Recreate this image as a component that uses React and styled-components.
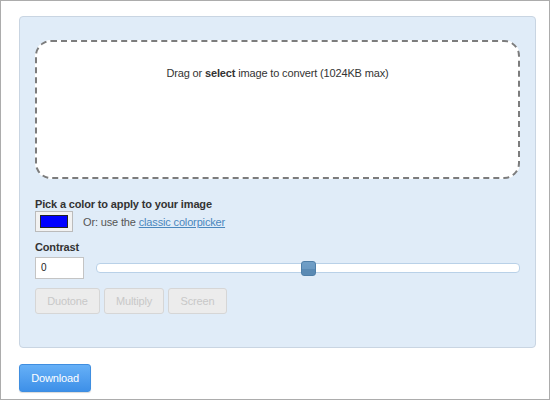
import styled, { createGlobalStyle } from "styled-components";

const Global = createGlobalStyle`
  html, body { margin: 0; padding: 0; background: #fff; }
  body { font-family: "Liberation Sans", Arial, sans-serif; font-size: 11px; color: #333; letter-spacing: -0.15px; }
`;

const Frame = styled.div`
  box-sizing: border-box;
  width: 550px;
  height: 400px;
  border: 1px solid #acacac;
  padding: 15px 13px 0 18px;
`;

const Panel = styled.div`
  background: #e0ecf8;
  border: 1px solid #c9d5e2;
  border-radius: 4px;
  padding: 23px 15px 20px 15px;
  height: 332px;
  box-sizing: border-box;
`;

const DropZone = styled.div`
  box-sizing: border-box;
  height: 139px;
  background: #fff;
  border: 2px dashed #7c7c7c;
  border-radius: 16px;
  display: flex;
  justify-content: center;
  padding-top: 25px;
  font-size: 11px;
  color: #333;
  b { font-weight: bold; }
`;

const Label = styled.div`
  font-weight: bold;
  font-size: 11px;
  color: #333;
  margin: ${(p) => p.$top}px 0 ${(p) => p.$bottom}px 0;
`;

const Row = styled.div`
  display: flex;
  align-items: center;
  gap: ${(p) => p.$gap || 10}px;
`;

const Swatch = styled.div`
  box-sizing: border-box;
  width: 38px;
  height: 21px;
  border: 1px solid #bbb;
  background: #f2f2f2;
  padding: 3px 4px;
  div { width: 100%; height: 100%; background: #0000ff; border: 1px solid #222; box-sizing: border-box; }
`;

const Hint = styled.span`
  color: #555;
  a { color: #4a87bd; text-decoration: underline; }
`;

const NumInput = styled.div`
  box-sizing: border-box;
  width: 49px;
  height: 22px;
  background: #fff;
  border: 1px solid #c4c4c4;
  padding: 4px 5px;
  font-size: 10px;
  color: #222;
  flex: none;
`;

const Track = styled.div`
  position: relative;
  flex: 1;
  height: 10px;
  box-sizing: border-box;
  border: 1px solid #b9d1e8;
  border-radius: 4px;
  background: #fff;
  margin-left: 2px;
`;

const Thumb = styled.div`
  position: absolute;
  top: -3px;
  width: 15px;
  height: 15px;
  box-sizing: border-box;
  margin-left: -7px;
  border: 1px solid #4f7fa8;
  border-radius: 3px;
  background: linear-gradient(#709fc7 0%, #6b9ac3 50%, #5a8ab4 55%, #5a8ab4 100%);
`;

const Buttons = styled.div`
  display: flex;
  gap: 4px;
  margin-top: 9px;
`;

const ModeButton = styled.button`
  box-sizing: border-box;
  height: 26px;
  width: ${(p) => p.$w}px;
  padding: 0;
  background: #ececec;
  border: 1px solid #d6d6d6;
  border-radius: 3px;
  color: #c8c8c8;
  font-family: "Liberation Sans", Arial, sans-serif;
  font-size: 11px;
  letter-spacing: -0.15px;
`;

const Download = styled.button`
  margin-top: 16px;
  box-sizing: border-box;
  width: 72px;
  height: 28px;
  padding: 0;
  border: 1px solid #3f8ee0;
  border-radius: 3px;
  background: linear-gradient(#66b0f7, #3e90e8);
  color: #fff;
  font-family: "Liberation Sans", Arial, sans-serif;
  font-size: 11px;
  letter-spacing: -0.15px;
  box-shadow: 0 1px 1px rgba(0, 0, 0, 0.15);
`;

export default function App() {
  const contrast = 0;
  const pct = ((contrast + 100) / 200) * 100;
  return (
    <>
      <Global />
      <Frame>
        <Panel>
          <DropZone>
            <span>
              Drag or <b>select</b> image to convert (1024KB max)
            </span>
          </DropZone>
          <Label $top={19} $bottom={1}>Pick a color to apply to your image</Label>
          <Row $gap={10}>
            <Swatch>
              <div />
            </Swatch>
            <Hint>
              Or: use the <a href="#">classic colorpicker</a>
            </Hint>
          </Row>
          <Label $top={9} $bottom={4}>Contrast</Label>
          <Row $gap={10}>
            <NumInput>0</NumInput>
            <Track>
              <Thumb style={{ left: `${pct}%` }} />
            </Track>
          </Row>
          <Buttons>
            <ModeButton $w={65} disabled>Duotone</ModeButton>
            <ModeButton $w={60} disabled>Multiply</ModeButton>
            <ModeButton $w={59} disabled>Screen</ModeButton>
          </Buttons>
        </Panel>
        <Download>Download</Download>
      </Frame>
    </>
  );
}
